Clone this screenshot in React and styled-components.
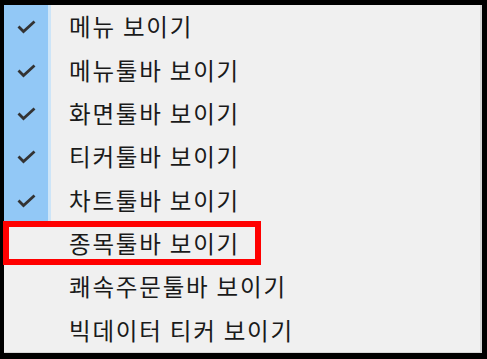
import React from "react";
import styled, { createGlobalStyle } from "styled-components";

const GlobalStyle = createGlobalStyle`
  html, body {
    margin: 0;
    padding: 0;
    background: #000;
  }
`;

const Frame = styled.div`
  box-sizing: border-box;
  width: 487px;
  height: 359px;
  border-style: solid;
  border-color: #000;
  border-width: 5px 5px 6px 4px;
  background: #f0f0f0;
`;

const Menu = styled.ul`
  box-sizing: border-box;
  height: 100%;
  margin: 0;
  padding: 0;
  list-style: none;
  display: flex;
  flex-direction: column;
  border-right: 2px solid #d6d6d6;
  border-bottom: 1px solid #d6d6d6;
`;

const Item = styled.li`
  position: relative;
  flex: 1;
  display: grid;
  grid-template-columns: 44px 3px 1fr;
  align-items: stretch;
  font-family: "Noto Sans CJK KR", "Noto Sans", sans-serif;
  font-size: 23.5px;
  letter-spacing: 1.8px;
  color: #1a1a1a;

  ${({ $marked }) =>
    $marked &&
    `
    &::after {
      content: "";
      position: absolute;
      left: -1px;
      top: -1px;
      width: 258px;
      height: 44px;
      box-sizing: border-box;
      border: 6px solid #ff0000;
    }
  `}
`;

const CheckCell = styled.span`
  display: flex;
  align-items: center;
  justify-content: center;
  padding-top: 1px;
  background: ${({ $checked }) => ($checked ? "#92c8f6" : "transparent")};
`;

const Edge = styled.span`
  background: ${({ $checked }) => ($checked ? "#cde5f8" : "transparent")};
`;

const Label = styled.span`
  display: flex;
  align-items: center;
  padding-left: 18px;
  padding-bottom: 1px;
  white-space: pre;
`;

const Check = () => (
  <svg width="19" height="14" viewBox="0 0 19 14">
    <path
      d="M1.5 6.5 L6.5 11.5 L17.5 1.5"
      fill="none"
      stroke="#333"
      strokeWidth="2.8"
    />
  </svg>
);

const items = [
  { label: "메뉴 보이기", checked: true },
  { label: "메뉴툴바 보이기", checked: true },
  { label: "화면툴바 보이기", checked: true },
  { label: "티커툴바 보이기", checked: true },
  { label: "차트툴바 보이기", checked: true },
  { label: "종목툴바 보이기", checked: false, marked: true },
  { label: "쾌속주문툴바 보이기", checked: false },
  { label: "빅데이터 티커 보이기", checked: false },
];

const App = () => (
  <>
    <GlobalStyle />
    <Frame>
      <Menu>
        {items.map(item => (
          <Item key={item.label} $marked={item.marked}>
            <CheckCell $checked={item.checked}>
              {item.checked && <Check />}
            </CheckCell>
            <Edge $checked={item.checked} />
            <Label>{item.label}</Label>
          </Item>
        ))}
      </Menu>
    </Frame>
  </>
);

export default App;
